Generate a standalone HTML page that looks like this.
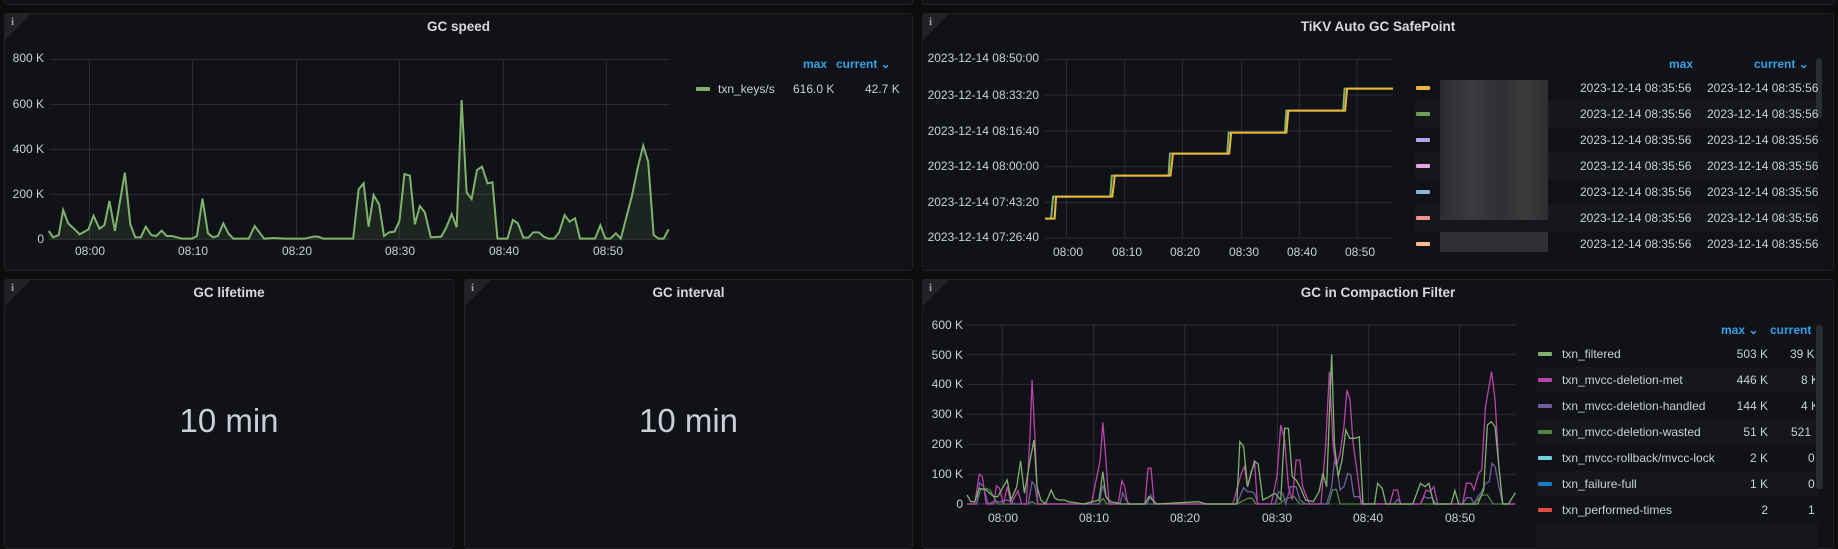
<!DOCTYPE html>
<html><head><meta charset="utf-8"><style>
*{margin:0;padding:0;box-sizing:border-box}
body{width:1838px;height:535px;background:#0c0d0d;position:relative;overflow:hidden;font-family:"Liberation Sans",sans-serif;color:#d8d9da}
.p{position:absolute;background:#111217;border:1px solid #202226;border-radius:3px;overflow:hidden}
.c{position:absolute;left:0;top:0;width:0;height:0;border-top:26px solid #202228;border-right:26px solid transparent}
.ci{position:absolute;left:6px;top:2px;font-size:11px;color:#9fa1a6;font-family:"Liberation Serif",serif;font-weight:bold}
.ti{position:absolute;font-size:13.5px;font-weight:bold;color:#d8d9da;text-align:center;line-height:16px}
.t{position:absolute;font-size:12px;line-height:14px;color:#c7d0d9;white-space:nowrap}
.r{text-align:right}
.m{text-align:center}
.h{position:absolute;font-size:12px;line-height:14px;color:#33a2e5;font-weight:bold;white-space:nowrap}
.sw{position:absolute;width:14px;height:4px;border-radius:1px}
.row{position:absolute;height:26px;background:#16171b}
.big{position:absolute;font-size:33px;color:#c7d0d9;text-align:center;line-height:36px}
svg{position:absolute;overflow:visible}
</style></head><body>

<!-- top strip -->
<div class="p" style="left:4px;top:-4px;width:909px;height:9px"></div>
<div class="p" style="left:922px;top:-4px;width:912px;height:9px"></div>

<!-- GC speed -->
<div class="p" style="left:4px;top:13px;width:909px;height:258px"><div class="c"></div><div class="ci">i</div></div>
<div class="ti" style="left:4px;width:909px;top:19px">GC speed</div>
<svg style="left:0;top:0" width="780" height="250" viewBox="0 0 1568 750" preserveAspectRatio="none">
<g stroke="#2c2e33" stroke-width="1" vector-effect="non-scaling-stroke">
<path vector-effect="non-scaling-stroke" d="M100 178H1347M100 313H1347M100 448H1347M100 583H1347M100 718H1347M180 178V718M387 178V718M596 178V718M803 178V718M1012 178V718M1219 178V718"/>
</g>
<path fill="rgba(126,178,109,0.12)" stroke="none" d="M98 718L98,693 107,712 118,705 127,630 137,670 148,685 160,703 178,688 188,647 200,686 210,675 220,603 231,693 251,518 262,673 272,712 283,712 293,680 304,705 314,708 325,692 335,708 345,708 356,712 366,716 386,716 396,708 407,596 418,700 428,712 438,708 449,670 459,700 469,716 500,716 512,678 531,716 550,714 574,716 612,716 630,710 640,710 650,716 710,716 721,568 731,550 741,680 751,585 762,613 772,708 782,697 793,695 803,663 813,522 824,527 834,673 844,618 854,637 866,712 887,710 897,683 908,642 918,682 928,300 938,577 948,597 959,510 969,500 980,550 990,547 1000,716 1020,716 1031,660 1041,670 1052,713 1062,713 1072,697 1083,697 1093,710 1103,716 1114,716 1124,697 1135,645 1145,665 1156,655 1166,716 1196,716 1207,676 1217,716 1227,716 1238,700 1248,716 1270,590 1283,497 1293,437 1303,485 1314,705 1324,716 1334,716 1344,688 1344,718Z"/>
<polyline fill="none" stroke="#7eb26d" stroke-width="2" vector-effect="non-scaling-stroke" points="98,693 107,712 118,705 127,630 137,670 148,685 160,703 178,688 188,647 200,686 210,675 220,603 231,693 251,518 262,673 272,712 283,712 293,680 304,705 314,708 325,692 335,708 345,708 356,712 366,716 386,716 396,708 407,596 418,700 428,712 438,708 449,670 459,700 469,716 500,716 512,678 531,716 550,714 574,716 612,716 630,710 640,710 650,716 710,716 721,568 731,550 741,680 751,585 762,613 772,708 782,697 793,695 803,663 813,522 824,527 834,673 844,618 854,637 866,712 887,710 897,683 908,642 918,682 928,300 938,577 948,597 959,510 969,500 980,550 990,547 1000,716 1020,716 1031,660 1041,670 1052,713 1062,713 1072,697 1083,697 1093,710 1103,716 1114,716 1124,697 1135,645 1145,665 1156,655 1166,716 1196,716 1207,676 1217,716 1227,716 1238,700 1248,716 1270,590 1283,497 1293,437 1303,485 1314,705 1324,716 1334,716 1344,688"/>
</svg>
<div class="t r" style="left:0;width:44px;top:51px">800 K</div>
<div class="t r" style="left:0;width:44px;top:97px">600 K</div>
<div class="t r" style="left:0;width:44px;top:142px">400 K</div>
<div class="t r" style="left:0;width:44px;top:187px">200 K</div>
<div class="t r" style="left:0;width:44px;top:232px">0</div>
<div class="t m" style="left:70px;width:40px;top:244px">08:00</div>
<div class="t m" style="left:173px;width:40px;top:244px">08:10</div>
<div class="t m" style="left:277px;width:40px;top:244px">08:20</div>
<div class="t m" style="left:380px;width:40px;top:244px">08:30</div>
<div class="t m" style="left:484px;width:40px;top:244px">08:40</div>
<div class="t m" style="left:588px;width:40px;top:244px">08:50</div>
<div class="h" style="left:803px;top:57px">max</div>
<div class="h" style="left:836px;top:57px">current ⌄</div>
<div class="sw" style="left:696px;top:87px;background:#7eb26d"></div>
<div class="t" style="left:718px;top:82px">txn_keys/s</div>
<div class="t" style="left:793px;top:82px">616.0 K</div>
<div class="t" style="left:865px;top:82px">42.7 K</div>

<!-- TiKV Auto GC SafePoint -->
<div class="p" style="left:922px;top:13px;width:912px;height:258px"><div class="c"></div><div class="ci">i</div></div>
<div class="ti" style="left:922px;width:912px;top:19px">TiKV Auto GC SafePoint</div>
<svg style="left:780px;top:0" width="780" height="240" viewBox="0 0 1568 720" preserveAspectRatio="none">
<path stroke="#2c2e33" vector-effect="non-scaling-stroke" fill="none" d="M533 178H1232M533 285H1232M533 393H1232M533 500H1232M533 607H1232M533 714H1232M576 178V714M693 178V714M809 178V714M928 178V714M1044 178V714M1160 178V714"/>
<polyline fill="none" stroke="#7eb26d" stroke-width="2" vector-effect="non-scaling-stroke" points="533,656 545,656 549,590 664,590 667,527 781,527 784,461 899,461 902,398 1015,398 1018,332 1132,332 1135,266 1232,266"/>
<polyline fill="none" stroke="#eab839" stroke-width="2" vector-effect="non-scaling-stroke" points="533,656 552,656 555,590 668,590 673,527 785,527 790,461 903,461 907,398 1018,398 1022,332 1136,332 1140,266 1232,266"/>
</svg>
<div class="t r" style="left:900px;width:139px;top:51px">2023-12-14 08:50:00</div>
<div class="t r" style="left:900px;width:139px;top:88px">2023-12-14 08:33:20</div>
<div class="t r" style="left:900px;width:139px;top:124px">2023-12-14 08:16:40</div>
<div class="t r" style="left:900px;width:139px;top:159px">2023-12-14 08:00:00</div>
<div class="t r" style="left:900px;width:139px;top:195px">2023-12-14 07:43:20</div>
<div class="t r" style="left:900px;width:139px;top:230px">2023-12-14 07:26:40</div>
<div class="t m" style="left:1048px;width:40px;top:245px">08:00</div>
<div class="t m" style="left:1107px;width:40px;top:245px">08:10</div>
<div class="t m" style="left:1165px;width:40px;top:245px">08:20</div>
<div class="t m" style="left:1224px;width:40px;top:245px">08:30</div>
<div class="t m" style="left:1282px;width:40px;top:245px">08:40</div>
<div class="t m" style="left:1340px;width:40px;top:245px">08:50</div>
<div class="h" style="left:1669px;top:57px">max</div>
<div class="h" style="left:1754px;top:57px">current ⌄</div>
<div class="row" style="left:1414px;top:101px;width:404px"></div>
<div class="row" style="left:1414px;top:153px;width:404px"></div>
<div class="row" style="left:1414px;top:205px;width:404px"></div>
<div style="position:absolute;left:1816px;top:58px;width:6px;height:60px;background:#2a2d31;border-radius:3px"></div>
<div style="position:absolute;left:1440px;top:80px;width:108px;height:140px;background:linear-gradient(90deg,#2b2d32,#3a3b3e 30%,#2e3035 55%,#3d3c3d 80%,#2c2d30)"></div>
<div class="sw" style="left:1416px;top:86px;background:#eab839"></div>
<div class="sw" style="left:1416px;top:112px;background:#6d9f59"></div>
<div class="sw" style="left:1416px;top:138px;background:#b7a4ef"></div>
<div class="sw" style="left:1416px;top:164px;background:#e5a8e2"></div>
<div class="sw" style="left:1416px;top:190px;background:#82b5d8"></div>
<div class="sw" style="left:1416px;top:216px;background:#f29191"></div>
<div class="sw" style="left:1416px;top:242px;background:#f9ba8f"></div>
<div style="position:absolute;left:1440px;top:232px;width:108px;height:20px;background:#2e3034"></div>
<div class="t" style="left:1580px;top:81px">2023-12-14 08:35:56</div><div class="t" style="left:1707px;top:81px">2023-12-14 08:35:56</div>
<div class="t" style="left:1580px;top:107px">2023-12-14 08:35:56</div><div class="t" style="left:1707px;top:107px">2023-12-14 08:35:56</div>
<div class="t" style="left:1580px;top:133px">2023-12-14 08:35:56</div><div class="t" style="left:1707px;top:133px">2023-12-14 08:35:56</div>
<div class="t" style="left:1580px;top:159px">2023-12-14 08:35:56</div><div class="t" style="left:1707px;top:159px">2023-12-14 08:35:56</div>
<div class="t" style="left:1580px;top:185px">2023-12-14 08:35:56</div><div class="t" style="left:1707px;top:185px">2023-12-14 08:35:56</div>
<div class="t" style="left:1580px;top:211px">2023-12-14 08:35:56</div><div class="t" style="left:1707px;top:211px">2023-12-14 08:35:56</div>
<div class="t" style="left:1580px;top:237px">2023-12-14 08:35:56</div><div class="t" style="left:1707px;top:237px">2023-12-14 08:35:56</div>

<!-- GC lifetime / interval -->
<div class="p" style="left:4px;top:279px;width:450px;height:270px"><div class="c"></div><div class="ci">i</div></div>
<div class="ti" style="left:4px;width:450px;top:285px">GC lifetime</div>
<div class="big" style="left:4px;width:450px;top:403px">10 min</div>
<div class="p" style="left:464px;top:279px;width:449px;height:270px"><div class="c"></div><div class="ci">i</div></div>
<div class="ti" style="left:464px;width:449px;top:285px">GC interval</div>
<div class="big" style="left:464px;width:449px;top:403px">10 min</div>

<!-- GC in Compaction Filter -->
<div class="p" style="left:922px;top:279px;width:912px;height:270px"><div class="c"></div><div class="ci">i</div></div>
<div class="ti" style="left:922px;width:912px;top:285px">GC in Compaction Filter</div>
<svg style="left:923px;top:300px" width="600" height="235" viewBox="0 0 1568 705" preserveAspectRatio="none">
<path stroke="#2c2e33" vector-effect="non-scaling-stroke" fill="none" d="M115 75H1548M115 164H1548M115 253H1548M115 343H1548M115 433H1548M115 523H1548M207 75V612M446 75V612M684 75V612M926 75V612M1164 75V612M1402 75V612"/>
<path stroke="#3a3c40" vector-effect="non-scaling-stroke" d="M115 612H1548"/>
<polyline fill="none" stroke="#508642" stroke-width="1.3" vector-effect="non-scaling-stroke" points="115,612 140,612 150,570 165,565 175,570 185,590 195,612 275,612 285,605 295,612 460,612 470,595 480,612 820,612 850,595 860,595 870,612 930,612 950,595 970,590 985,612 1060,612 1070,570 1080,568 1090,612 1440,612 1460,585 1475,585 1490,612 1548,612"/>
<polyline fill="none" stroke="#705da0" stroke-width="1.3" vector-effect="non-scaling-stroke" points="115,612 140,612 148,548 158,560 170,612 185,605 205,605 220,600 240,612 275,612 285,545 292,555 300,612 460,612 470,555 478,590 490,612 515,612 522,578 530,600 540,612 585,612 595,585 605,612 820,612 838,563 848,575 858,575 866,580 876,612 920,612 930,575 940,580 948,612 960,560 975,560 985,600 1000,612 1055,612 1068,560 1075,485 1082,500 1090,570 1100,560 1110,520 1118,525 1126,590 1140,590 1150,612 1230,612 1240,598 1250,612 1300,612 1310,590 1320,595 1330,592 1340,612 1410,612 1420,593 1432,593 1440,612 1450,590 1460,575 1470,550 1480,545 1487,490 1495,500 1505,560 1515,612 1548,612"/>
<polyline fill="none" stroke="#ba43a9" stroke-width="1.3" vector-effect="non-scaling-stroke" points="115,612 135,612 147,523 155,530 165,612 185,612 192,557 200,565 210,612 220,560 230,610 240,590 248,572 258,612 270,612 280,400 285,240 292,400 300,612 440,612 463,480 470,367 478,480 486,612 510,612 520,542 527,560 535,612 580,612 588,505 596,505 604,612 810,612 822,560 832,520 840,500 848,560 858,520 866,480 874,612 910,612 925,530 935,375 945,420 955,560 965,600 975,480 985,480 992,560 1010,612 1040,612 1052,440 1062,215 1072,440 1080,500 1090,460 1100,380 1108,270 1116,300 1124,430 1135,520 1145,612 1220,612 1230,570 1240,570 1248,612 1300,612 1315,570 1325,575 1335,560 1345,612 1410,612 1420,550 1432,550 1440,570 1452,520 1460,510 1470,320 1486,215 1495,300 1505,500 1515,612 1548,612"/>
<polyline fill="none" stroke="#7eb26d" stroke-width="1.3" vector-effect="non-scaling-stroke" points="115,585 125,605 135,605 147,565 155,567 165,570 175,580 185,590 195,590 210,560 220,540 230,600 245,560 255,483 265,580 280,480 290,420 298,560 308,600 320,612 335,570 345,595 355,600 370,600 380,605 420,612 460,600 470,515 478,590 490,605 520,612 580,612 590,590 600,600 610,612 720,605 740,612 820,612 828,425 838,440 848,560 858,515 868,485 876,492 888,600 905,590 920,580 935,600 945,385 955,385 965,530 975,540 985,560 1000,600 1020,605 1035,575 1045,520 1055,560 1068,163 1075,430 1085,530 1095,480 1105,390 1115,415 1130,415 1140,410 1150,612 1180,612 1188,550 1200,565 1210,612 1280,612 1300,550 1312,560 1322,550 1335,612 1380,612 1390,572 1400,612 1450,612 1465,570 1475,375 1485,365 1495,380 1505,500 1515,612 1530,612 1548,578"/>
</svg>
<div class="t r" style="left:900px;width:63px;top:318px">600 K</div>
<div class="t r" style="left:900px;width:63px;top:348px">500 K</div>
<div class="t r" style="left:900px;width:63px;top:377px">400 K</div>
<div class="t r" style="left:900px;width:63px;top:407px">300 K</div>
<div class="t r" style="left:900px;width:63px;top:437px">200 K</div>
<div class="t r" style="left:900px;width:63px;top:467px">100 K</div>
<div class="t r" style="left:900px;width:63px;top:497px">0</div>
<div class="t m" style="left:983px;width:40px;top:511px">08:00</div>
<div class="t m" style="left:1074px;width:40px;top:511px">08:10</div>
<div class="t m" style="left:1165px;width:40px;top:511px">08:20</div>
<div class="t m" style="left:1257px;width:40px;top:511px">08:30</div>
<div class="t m" style="left:1348px;width:40px;top:511px">08:40</div>
<div class="t m" style="left:1440px;width:40px;top:511px">08:50</div>
<div class="h" style="left:1721px;top:323px">max ⌄</div>
<div class="h" style="left:1770px;top:323px">current</div>
<div class="row" style="left:1536px;top:367px;width:282px"></div>
<div class="row" style="left:1536px;top:419px;width:282px"></div>
<div class="row" style="left:1536px;top:471px;width:282px"></div>
<div class="row" style="left:1536px;top:523px;width:282px"></div>
<div style="position:absolute;left:1816px;top:325px;width:7px;height:164px;background:#2a2d31;border-radius:3px"></div>
<div style="position:absolute;left:1536px;top:340px;width:279px;height:195px;overflow:hidden">
<div class="sw" style="left:2px;top:12px;background:#7eb26d"></div><div class="t" style="left:26px;top:7px">txn_filtered</div><div class="t r" style="left:160px;width:72px;top:7px">503 K</div><div class="t" style="left:254px;top:7px">39 K</div>
<div class="sw" style="left:2px;top:38px;background:#ba43a9"></div><div class="t" style="left:26px;top:33px">txn_mvcc-deletion-met</div><div class="t r" style="left:160px;width:72px;top:33px">446 K</div><div class="t" style="left:265px;top:33px">8 K</div>
<div class="sw" style="left:2px;top:64px;background:#705da0"></div><div class="t" style="left:26px;top:59px">txn_mvcc-deletion-handled</div><div class="t r" style="left:160px;width:72px;top:59px">144 K</div><div class="t" style="left:265px;top:59px">4 K</div>
<div class="sw" style="left:2px;top:90px;background:#508642"></div><div class="t" style="left:26px;top:85px">txn_mvcc-deletion-wasted</div><div class="t r" style="left:160px;width:72px;top:85px">51 K</div><div class="t" style="left:255px;top:85px">521</div>
<div class="sw" style="left:2px;top:116px;background:#6ed0e0"></div><div class="t" style="left:26px;top:111px">txn_mvcc-rollback/mvcc-lock</div><div class="t r" style="left:160px;width:72px;top:111px">2 K</div><div class="t" style="left:272px;top:111px">0</div>
<div class="sw" style="left:2px;top:142px;background:#1f78c1"></div><div class="t" style="left:26px;top:137px">txn_failure-full</div><div class="t r" style="left:160px;width:72px;top:137px">1 K</div><div class="t" style="left:272px;top:137px">0</div>
<div class="sw" style="left:2px;top:168px;background:#e24d42"></div><div class="t" style="left:26px;top:163px">txn_performed-times</div><div class="t r" style="left:160px;width:72px;top:163px">2</div><div class="t" style="left:272px;top:163px">1</div>
</div>
</body></html>
